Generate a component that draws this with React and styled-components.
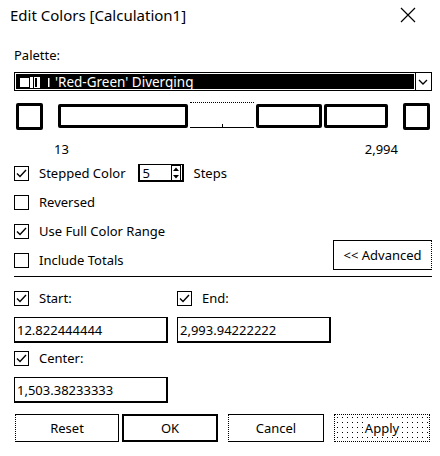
import React from "react";
import styled, { createGlobalStyle } from "styled-components";

const Global = createGlobalStyle`
  html, body { margin: 0; padding: 0; background: #fff; }
  body { font-family: "Noto Sans", "Open Sans", sans-serif; color: #000; }
`;

const Dialog = styled.div`
  width: 440px;
  height: 456px;
  box-sizing: border-box;
  padding: 0 8px 0 14px;
  display: flex;
  flex-direction: column;
`;

const TitleBar = styled.div`
  height: 30px;
  margin-left: -4px;
  display: flex;
  align-items: center;
  justify-content: space-between;
  font-size: 15px;
`;

const Close = styled.svg`
  width: 16px;
  height: 16px;
  margin-right: 16px;
`;

const Label = styled.div`
  font-size: 13px;
  line-height: 18px;
  margin-top: ${(p) => p.$mt || 0}px;
`;

const Select = styled.div`
  margin-top: 8px;
  height: 17px;
  border: 1px solid #000;
  display: flex;
  align-items: stretch;
`;

const SelectValue = styled.div`
  flex: 1;
  background: #000;
  color: #fff;
  border: 1px solid #fff;
  outline: 1px solid #000;
  display: flex;
  align-items: center;
  gap: 4px;
  padding-left: 3px;
  font-size: 13.5px;
`;

const Arrow = styled.div`
  width: 16px;
  display: flex;
  align-items: center;
  justify-content: center;
`;

const RampRow = styled.div`
  margin-top: 12px;
  display: flex;
  align-items: center;
  height: 26px;
`;

const Swatch = styled.div`
  width: 21px;
  height: 21px;
  border: 3px solid #000;
  border-radius: 2px;
  margin-left: ${(p) => p.$ml || 0}px;
`;

const Ramp = styled.div`
  margin-left: 15px;
  height: 24px;
  display: flex;
  gap: 2px;
`;

const Seg = styled.div`
  width: ${(p) => p.$w}px;
  box-sizing: border-box;
  border: 3px solid #000;
  border-radius: 2px;
`;

const GapSeg = styled.div`
  width: ${(p) => p.$w}px;
  box-sizing: border-box;
  border-top: 1px dotted #000;
  border-bottom: 1px solid #000;
  margin-top: -2px;
  position: relative;
`;

const Tick = styled.div`
  position: absolute;
  left: 50%;
  bottom: 0;
  width: 1px;
  height: 3px;
  background: #000;
`;

const Values = styled.div`
  display: flex;
  justify-content: space-between;
  font-size: 13px;
  padding: 11px 34px 0 40px;
  line-height: 18px;
`;

const CheckRow = styled.div`
  display: flex;
  align-items: center;
  height: 20px;
  margin-top: ${(p) => p.$mt || 0}px;
  font-size: 13px;
  gap: 10px;
`;

const Box = styled.div`
  width: 13px;
  height: 13px;
  border: 1px solid #000;
  display: flex;
  align-items: center;
  justify-content: center;
`;

const Spin = styled.div`
  margin-left: 2px;
  width: 46px;
  height: 18px;
  border: 2px solid #000;
  border-top-width: 1px;
  display: flex;
  align-items: center;
  justify-content: space-between;
  padding-left: 3px;
  box-sizing: border-box;
  font-size: 13px;
`;

const SpinArrows = styled.svg`
  width: 10px;
  height: 16px;
  margin-right: 1px;
`;

const TotalsRow = styled.div`
  display: flex;
  align-items: center;
  justify-content: space-between;
`;

const Advanced = styled.div`
  width: 99px;
  height: 30px;
  border: 1px solid #000;
  border-right: 1px dotted #000;
  box-sizing: border-box;
  display: flex;
  align-items: center;
  justify-content: center;
  font-size: 13px;
  margin-top: -2px;
`;

const Separator = styled.div`
  margin-top: 6px;
  height: 0;
  border-top: 1px solid #000;
`;

const Pair = styled.div`
  display: flex;
  gap: 9px;
  margin-top: ${(p) => p.$mt || 0}px;
`;

const Col = styled.div`
  width: 154px;
  display: flex;
  flex-direction: column;
`;

const Input = styled.div`
  height: 26px;
  border: 1px solid #000;
  border-right-width: 2px;
  border-bottom-width: 2px;
  box-sizing: border-box;
  display: flex;
  align-items: center;
  padding-left: 2px;
  font-size: 13px;
  margin-top: ${(p) => p.$mt || 0}px;
`;

const Buttons = styled.div`
  margin-top: 11px;
  display: flex;
  padding-left: 1px;
`;

const Button = styled.div`
  width: ${(p) => p.$w}px;
  height: 28px;
  box-sizing: border-box;
  margin-left: ${(p) => p.$ml || 0}px;
  border: ${(p) => (p.$default ? "2px solid #000" : "1px solid #000")};
  border-left-style: ${(p) => (p.$default ? "solid" : "dotted")};
  border-style: ${(p) => (p.$disabled ? "dotted" : undefined)};
  background: ${(p) =>
    p.$disabled
      ? "radial-gradient(circle, #000 0.6px, transparent 0.9px) 0 0 / 5px 5px"
      : "#fff"};
  display: flex;
  align-items: center;
  justify-content: center;
  font-size: 13px;
`;

const ApplyText = styled.span`
  background: #fff;
  padding: 0 1px;
`;

const Check = () => (
  <svg width="11" height="9" viewBox="0 0 11 9">
    <path d="M1 4.5 L4 7.5 L10 1" fill="none" stroke="#000" strokeWidth="1.4" />
  </svg>
);

const CB = ({ on }) => <Box>{on && <Check />}</Box>;

export default function App() {
  return (
    <>
      <Global />
      <Dialog>
        <TitleBar>
          <span>Edit Colors [Calculation1]</span>
          <Close viewBox="0 0 16 16">
            <path d="M1 1 L15 15 M15 1 L1 15" stroke="#000" strokeWidth="1.2" />
          </Close>
        </TitleBar>
        <Label $mt={16}>Palette:</Label>
        <Select>
          <SelectValue>
            <svg width="32" height="12" viewBox="0 0 32 12">
              <rect x="1" y="2" width="9" height="9" fill="#fff" />
              <rect x="11" y="1" width="3" height="11" fill="#fff" />
              <rect x="15" y="1" width="6" height="11" fill="#fff" />
              <rect x="16" y="2" width="2" height="9" fill="#000" />
              <rect x="29" y="2" width="1.5" height="9" fill="#fff" />
            </svg>
            <span>'Red-Green' Diverging</span>
          </SelectValue>
          <Arrow>
            <svg width="10" height="6" viewBox="0 0 10 6">
              <path d="M1 1 L5 5 L9 1" fill="none" stroke="#000" strokeWidth="1.3" />
            </svg>
          </Arrow>
        </Select>
        <RampRow>
          <Swatch $ml={2} />
          <Ramp>
            <Seg $w={130} />
            <GapSeg $w={64}>
              <Tick />
            </GapSeg>
            <Seg $w={66} />
            <Seg $w={64} />
          </Ramp>
          <Swatch $ml={15} />
        </RampRow>
        <Values>
          <span>13</span>
          <span>2,994</span>
        </Values>
        <CheckRow $mt={5}>
          <CB on />
          <span>Stepped Color</span>
          <Spin>
            <span>5</span>
            <SpinArrows viewBox="0 0 10 16">
              <rect x="0.5" y="0.5" width="9" height="15" fill="none" stroke="#000" />
              <path d="M2 6 L5 2.5 L8 6 Z M2 10 L5 13.5 L8 10 Z" fill="#000" />
            </SpinArrows>
          </Spin>
          <span>Steps</span>
        </CheckRow>
        <CheckRow $mt={9}>
          <CB />
          <span>Reversed</span>
        </CheckRow>
        <CheckRow $mt={9}>
          <CB on />
          <span>Use Full Color Range</span>
        </CheckRow>
        <TotalsRow>
          <CheckRow $mt={9}>
            <CB />
            <span>Include Totals</span>
          </CheckRow>
          <Advanced>&lt;&lt; Advanced</Advanced>
        </TotalsRow>
        <Separator />
        <Pair $mt={11}>
          <Col>
            <CheckRow>
              <CB on />
              <span>Start:</span>
            </CheckRow>
            <Input $mt={9}>12.822444444</Input>
          </Col>
          <Col>
            <CheckRow>
              <CB on />
              <span>End:</span>
            </CheckRow>
            <Input $mt={9}>2,993.94222222</Input>
          </Col>
        </Pair>
        <Pair $mt={5}>
          <Col>
            <CheckRow>
              <CB on />
              <span>Center:</span>
            </CheckRow>
            <Input $mt={9}>1,503.38233333</Input>
          </Col>
        </Pair>
        <Buttons>
          <Button $w={104}>Reset</Button>
          <Button $w={96} $ml={3} $default>OK</Button>
          <Button $w={96} $ml={10}>Cancel</Button>
          <Button $w={96} $ml={10} $disabled>
            <ApplyText>Apply</ApplyText>
          </Button>
        </Buttons>
      </Dialog>
    </>
  );
}
